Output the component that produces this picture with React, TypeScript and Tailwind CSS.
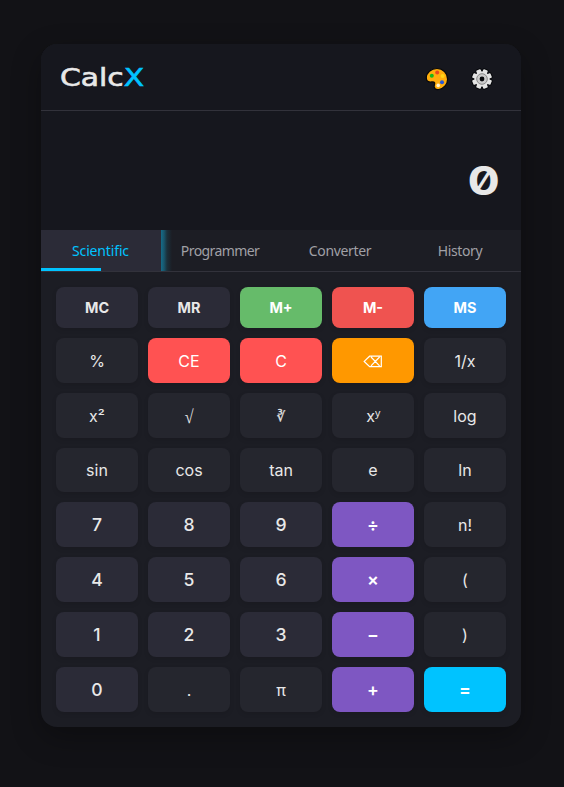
import React from "react";

type Kind = "fn" | "num" | "op" | "clear" | "back" | "eq";
type Key = { label: React.ReactNode; kind: Kind };

const base =
  "flex items-center justify-center rounded-lg leading-[normal] shadow-[0_2px_5px_rgba(0,0,0,0.1)]";

const kinds: Record<Kind, string> = {
  fn: "bg-[#25262e] text-[#e8e8e8] text-[16px]",
  num: "bg-[#2b2b37] text-[#e8e8e8] text-[17.6px] font-medium",
  op: "bg-[#7e57c2] text-white text-[17.6px] font-semibold",
  clear: "bg-[#ff5252] text-white text-[16px]",
  back: "bg-[#ff9800] text-white text-[16px]",
  eq: "bg-[#00c3ff] text-white text-[17.6px] font-semibold",
};

const memory = [
  { label: "MC", color: "bg-[#2b2b37] text-[#e8e8e8]" },
  { label: "MR", color: "bg-[#2b2b37] text-[#e8e8e8]" },
  { label: "M+", color: "bg-[#66bb6a] text-white" },
  { label: "M-", color: "bg-[#ef5350] text-white" },
  { label: "MS", color: "bg-[#42a5f5] text-white" },
];

function Backspace() {
  return (
    <svg width="20" height="13" viewBox="0 0 20 13" fill="none" stroke="#fff" strokeWidth="1.2">
      <path d="M6.6 1.2H18.3V11.6H6.6L1.2 6.4ZM8 2l8.6 8.8M16.6 2L8 10.8" />
    </svg>
  );
}

const root = <span className="font-['Liberation_Serif',serif] text-[19px] leading-none inline-block scale-x-[0.85]">√</span>;
const cubeRoot = (
  <span className="font-['DejaVu_Sans',sans-serif] text-[13px] [-webkit-text-stroke:0.3px_currentColor]">∛</span>
);
const power = (
  <span className="leading-[19px]">
    x<span className="font-['Noto_Sans',sans-serif] text-[18px] leading-none inline-block origin-left scale-x-[0.9] -mr-px">ʸ</span>
  </span>
);

const k = (kind: Kind, ...labels: React.ReactNode[]): Key[] =>
  labels.map((label) => ({ label, kind }));

const keys: Key[] = [
  ...k("fn", "%"), ...k("clear", "CE", "C"), ...k("back", <Backspace />), ...k("fn", "1/x"),
  ...k("fn", "x²", root, cubeRoot, power, "log"),
  ...k("fn", "sin", "cos", "tan", "e", "ln"),
  ...k("num", "7", "8", "9"), ...k("op", "÷"), ...k("fn", "n!"),
  ...k("num", "4", "5", "6"), ...k("op", "×"), ...k("fn", "("),
  ...k("num", "1", "2", "3"), ...k("op", "−"), ...k("fn", ")"),
  ...k("num", "0"), ...k("fn", ".", "π"), ...k("op", "+"), ...k("eq", "="),
];

function Palette() {
  return (
    <svg width="24" height="24" viewBox="0 0 24 24">
      <path
        d="M12 1.5C6 1.5 1.3 5.6 1.3 10.8c0 2.8 1.4 4.1 3.8 4.2 1.9.1 3.9-.6 4.5.7.5 1.2-.7 2.2-.4 4.2.4 2 2.4 3 4.6 2.6 5.1-.8 8.8-5.2 8.8-10.2 0-6-4.7-10.8-10.6-10.8Z"
        fill="#ffad0d" stroke="#07080b" strokeWidth="1.2"
      />
      <circle cx="6.8" cy="8.7" r="2" fill="#18b818" />
      <circle cx="12.2" cy="5.6" r="2" fill="#e84820" />
      <circle cx="17.6" cy="8.9" r="2" fill="#ffd316" />
      <circle cx="17" cy="15.2" r="2" fill="#2858d8" />
      <circle cx="13.2" cy="18.4" r="1.8" fill="#fff3d4" />
    </svg>
  );
}

const teeth = [22.5, 67.5, 112.5, 157.5];

function Gear() {
  return (
    <svg width="24" height="24" viewBox="-12 -12 24 24">
      <g fill="#e4e4e4" stroke="#050609" strokeWidth="2">
        {teeth.map((a) => (
          <rect key={a} x="-2.2" y="-9.9" width="4.4" height="19.8" rx="0.8" transform={`rotate(${a})`} />
        ))}
      </g>
      <circle r="7.6" fill="#e4e4e4" />
      <g fill="#e4e4e4">
        {teeth.map((a) => (
          <rect key={a} x="-2.4" y="-9.9" width="4.8" height="19.8" rx="0.8" transform={`rotate(${a})`} />
        ))}
      </g>
      <circle r="5.3" fill="#cbcbcb" stroke="#898989" strokeWidth="1" />
      <circle r="2.4" fill="#08090c" />
    </svg>
  );
}

export default function App() {
  return (
    <div className="flex h-[787px] w-[564px] flex-col bg-[#121216] pl-[41px] pt-[44px] font-['Inter','DejaVu_Sans',sans-serif]">
      <div className="flex h-[683px] w-[480px] flex-col overflow-hidden rounded-2xl bg-[#1c1d24] shadow-[0_10px_30px_rgba(0,0,0,0.3)]">
        <header className="flex h-[67px] items-center justify-between border-b border-[#32323b] bg-[#16171e] pl-[19px] pr-[27px]">
          <h1 className="origin-left scale-x-[1.24] pt-[2px] font-['DejaVu_Sans',sans-serif] text-[24px] leading-[30px] text-[#e8e8e8] [-webkit-text-stroke:0.6px_currentColor]">
            Calc<span className="text-[#00c3ff]">X</span>
          </h1>
          <div className="flex gap-[21px] pt-[3px]">
            <Palette />
            <Gear />
          </div>
        </header>
        <div className="flex h-[119px] items-center justify-end bg-[#16171e] pr-[21px] pt-5">
          <span className="origin-right scale-x-[1.2] text-[40px] font-bold leading-none text-[#e8e8e8] [font-feature-settings:'zero']">
            0
          </span>
        </div>
        <nav className="grid h-[42px] grid-cols-4 border-b border-[#32323b] font-['Noto_Sans','Open_Sans',sans-serif] text-[14px] text-[#a0a0a6]">
          <div className="relative flex items-center justify-center bg-[#2b2b37] pr-px tracking-[-0.15px] text-[#00c3ff]">
            Scientific
            <div className="absolute bottom-0 left-0 h-[3px] w-[60px] bg-[#00c3ff]" />
          </div>
          <div className="flex items-center justify-center bg-[linear-gradient(to_right,#156b88,#18566c_3px,#1b303b_6px,#1c1d24_11px)] pr-[2px] tracking-[-0.6px]">
            Programmer
          </div>
          <div className="flex items-center justify-center pr-[2px] tracking-[-0.35px]">Converter</div>
          <div className="flex items-center justify-center pr-[2px] tracking-[-0.4px]">History</div>
        </nav>
        <div className="flex flex-1 flex-col gap-[10px] p-[15px]">
          <div className="grid h-[40.8px] grid-cols-5 gap-[10px]">
            {memory.map((m) => (
              <button key={m.label} className={`${base} ${m.color} text-[14.4px] font-bold`}>
                {m.label}
              </button>
            ))}
          </div>
          <div className="grid flex-1 grid-cols-5 grid-rows-7 gap-[10px]">
            {keys.map((key, i) => (
              <button key={i} className={`${base} ${kinds[key.kind]} ${i < 10 ? "pt-[2px]" : ""}`}>
                {key.label}
              </button>
            ))}
          </div>
        </div>
      </div>
    </div>
  );
}
